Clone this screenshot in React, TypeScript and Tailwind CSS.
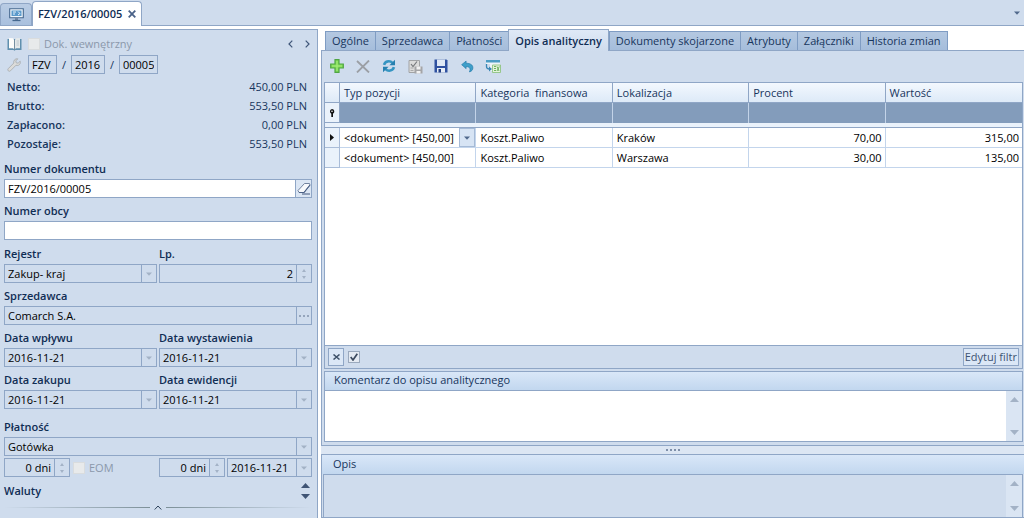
import React from "react";

const Down = ({ className = "fill-[#a3b2c6]" }: { className?: string }) => (
  <svg width="6" height="4" viewBox="0 0 6 4" className={className} aria-hidden="true">
    <path d="M0 0.500h6L3 3.800z" />
  </svg>
);

const box = "flex h-[19px] min-w-0 border border-[#8fa6c6]";
const side = "flex w-[15px] shrink-0 items-center justify-center border-l border-[#8fa6c6]";
const text = "w-full min-w-0 flex-1 bg-transparent px-[3px] text-black outline-none";
const labelCls = "block h-5 font-semibold leading-5 text-[#0f2d54]";

function Field({ label, id, children }: { label: string; id: string; children: React.ReactNode }) {
  return (
    <div className="min-w-0">
      <label htmlFor={id} className={labelCls}>{label}</label>
      {children}
    </div>
  );
}

function DateBox({ id, label, value, className = "" }: { id: string; label?: string; value: string; className?: string }) {
  return (
    <div className={`${box} ${className}`}>
      <input id={id} aria-label={label} className={text} defaultValue={value} readOnly />
      <button type="button" aria-label="Wybierz datę" className={side}><Down /></button>
    </div>
  );
}

function SelectBox({ id, value }: { id: string; value: string }) {
  return (
    <div className={`${box} relative`}>
      <select id={id} className={`${text} appearance-none`}>
        <option>{value}</option>
      </select>
      <span className={`${side} pointer-events-none`}><Down /></span>
    </div>
  );
}

function Spin({ id, label, value, className = "" }: { id: string; label?: string; value: string; className?: string }) {
  return (
    <div className={`${box} ${className}`}>
      <input id={id} aria-label={label} className={`${text} text-right`} defaultValue={value} readOnly />
      <div className="flex w-[15px] shrink-0 flex-col items-center justify-center gap-1 border-l border-[#8fa6c6]">
        <button type="button" aria-label="Zwiększ"><svg width="4" height="3" viewBox="0 0 4 3" className="block fill-[#a3b2c6]"><path d="M0 3h4L2 0z" /></svg></button>
        <button type="button" aria-label="Zmniejsz"><svg width="4" height="3" viewBox="0 0 4 3" className="block fill-[#a3b2c6]"><path d="M0 0h4L2 3z" /></svg></button>
      </div>
    </div>
  );
}

const totals = [
  ["Netto:", "450,00 PLN"],
  ["Brutto:", "553,50 PLN"],
  ["Zapłacono:", "0,00 PLN"],
  ["Pozostaje:", "553,50 PLN"],
];

function Sidebar() {
  return (
    <aside className="flex w-[318px] shrink-0 flex-col border-t border-r border-[#8fa6c6] bg-[#cfdced] pr-[5px] pl-1">
      <div className="flex h-6 items-center pt-1 pl-[3px]">
        <svg width="15" height="14" viewBox="0 0 15 14" aria-hidden="true">
          <path d="M0.500 2h14v11H8.500l-1 0.800-1-0.800h-6z" fill="#5f8fae" />
          <path d="M2 1l4 0.300L7.200 3v9.300L6 11.300H2z" fill="#fdfdfb" />
          <path d="M13 1L9 1.300 7.800 3v9.300L9 11.300h4z" fill="#e4e9ea" />
          <path d="M7.500 3v10" stroke="#6e8798" strokeWidth="0.800" />
          <path d="M9.500 4h2.500M9.500 6h2.500M9.500 8h2.500" stroke="#b4bfc6" strokeWidth="0.800" />
        </svg>
        <label className="ml-[6px] flex items-center gap-[4px] text-[#8b98ab]">
          <input type="checkbox" disabled className="size-3 appearance-none border border-[#d9dcde] bg-[#e8eaeb]" />
          Dok. wewnętrzny
        </label>
        <div className="ml-auto flex gap-3 pr-[2px]">
          <button type="button" aria-label="Poprzedni"><svg width="5" height="8" viewBox="0 0 5 8" fill="none" stroke="#3f5679" strokeWidth="1.200"><path d="M4.300 0.700L1 4l3.300 3.300" /></svg></button>
          <button type="button" aria-label="Następny"><svg width="5" height="8" viewBox="0 0 5 8" fill="none" stroke="#3f5679" strokeWidth="1.200"><path d="M0.700 0.700L4 4 0.700 7.300" /></svg></button>
        </div>
      </div>
      <div className="mt-px flex h-[19px] items-center pl-[3px] text-[#17355c]">
        <svg width="14" height="14" viewBox="0 0 14 14" aria-hidden="true">
          <path d="M10.800 0.800L8.800 2.900l0.400 1.900 1.900 0.400 2.100-2c0.500 1.900-0.300 3.500-1.800 4.100-0.900 0.300-1.700 0.200-2.400-0.100L3.500 12.800c-0.700 0.600-1.600 0.600-2.200 0-0.600-0.600-0.600-1.500 0-2.200L6.800 5C6.200 2.800 8 0.300 10.800 0.800z" fill="#dcdcda" stroke="#a5a8ab" strokeWidth="0.800" />
        </svg>
        <input aria-label="Symbol" readOnly defaultValue="FZV" className="ml-[7px] h-[19px] w-[29px] border border-[#8fa6c6] px-[3px] text-black" />
        <span className="w-[14px] text-center">/</span>
        <input aria-label="Rok" readOnly defaultValue="2016" className="h-[19px] w-[34px] border border-[#8fa6c6] px-[3px] text-black" />
        <span className="w-[14px] text-center">/</span>
        <input aria-label="Numer" readOnly defaultValue="00005" className="h-[19px] w-[39px] border border-[#8fa6c6] px-[3px] text-black" />
      </div>
      <dl className="mt-[3px] pr-[5px] pl-[3px] text-[#17355c]">
        {totals.map(([k, v]) => (
          <div key={k} className="flex h-[19px] items-center justify-between">
            <dt className="font-semibold">{k}</dt>
            <dd>{v}</dd>
          </div>
        ))}
      </dl>
      <div className="mt-[6px] grid gap-[3px]">
        <Field label="Numer dokumentu" id="nr">
          <div className={`${box} bg-white`}>
            <input id="nr" className={text} defaultValue="FZV/2016/00005" />
            <button type="button" aria-label="Wyczyść" className="flex w-4 shrink-0 items-center justify-center border-l border-[#8fa6c6] bg-[#dbe6f4]">
              <svg width="14" height="13" viewBox="0 0 14 13"><path d="M1 8.500L7.500 1.500h5L13 3 7 10.500H2z" fill="#f7f9fc" stroke="#647694" strokeWidth="0.900" /><path d="M2 10.500h5L13 3" fill="none" stroke="#4c6288" strokeWidth="1.200" /><path d="M5 12h8" stroke="#41567c" /></svg>
            </button>
          </div>
        </Field>
        <Field label="Numer obcy" id="nro">
          <div className={`${box} bg-white`}><input id="nro" className={text} /></div>
        </Field>
      </div>
      <div className="mt-1 grid grid-cols-2 gap-x-[2px] gap-y-[3px]">
        <Field label="Rejestr" id="rej"><SelectBox id="rej" value="Zakup- kraj" /></Field>
        <Field label="Lp." id="lp"><Spin id="lp" value="2" /></Field>
        <div className="col-span-2">
          <Field label="Sprzedawca" id="spr">
            <div className={box}>
              <input id="spr" className={text} defaultValue="Comarch S.A." readOnly />
              <button type="button" aria-label="Wybierz sprzedawcę" className={side}>
                <svg width="10" height="2" viewBox="0 0 10 2" fill="#95a5bc"><path d="M0 0h2v2H0zM4 0h2v2H4zM8 0h2v2H8z" /></svg>
              </button>
            </div>
          </Field>
        </div>
        <Field label="Data wpływu" id="dw"><DateBox id="dw" value="2016-11-21" /></Field>
        <Field label="Data wystawienia" id="dwy"><DateBox id="dwy" value="2016-11-21" /></Field>
        <Field label="Data zakupu" id="dz"><DateBox id="dz" value="2016-11-21" /></Field>
        <Field label="Data ewidencji" id="de"><DateBox id="de" value="2016-11-21" /></Field>
      </div>
      <div className="mt-2">
        <Field label="Płatność" id="pl"><SelectBox id="pl" value="Gotówka" /></Field>
        <div className="mt-[2px] grid grid-cols-2 gap-x-[2px]">
          <div className="flex items-center">
            <Spin id="t1" label="Termin" value="0 dni" className="w-[66px]" />
            <label className="ml-[3px] flex items-center gap-1 text-[#8b98ab]">
              <input type="checkbox" disabled className="size-3 appearance-none border border-[#d9dcde] bg-[#e8eaeb]" />
              EOM
            </label>
          </div>
          <div className="flex gap-[2px]">
            <Spin id="t2" label="Odroczenie" value="0 dni" className="w-[66px]" />
            <DateBox id="t3" label="Termin płatności" value="2016-11-21" className="flex-1" />
          </div>
        </div>
      </div>
      <div className="mt-[2px] flex h-6 items-center justify-between">
        <h2 className="font-semibold text-[#0f2d54]">Waluty</h2>
        <div className="flex flex-col gap-[6px] pr-[2px]">
          <button type="button" aria-label="W górę"><svg width="9" height="5" viewBox="0 0 9 5" className="block fill-[#3f5474]"><path d="M0 5h9L4.500 0z" /></svg></button>
          <button type="button" aria-label="W dół"><svg width="9" height="5" viewBox="0 0 9 5" className="block fill-[#3f5474]"><path d="M0 0h9L4.500 5z" /></svg></button>
        </div>
      </div>
      <div className="mt-[2px] flex items-center gap-1">
        <span className="h-px flex-1 bg-linear-to-r from-transparent to-[#7d9098]" />
        <button type="button" aria-label="Zwiń"><svg width="8" height="5" viewBox="0 0 8 5" fill="none" stroke="#2f435c" className="block"><path d="M0.700 4.500L4 1l3.300 3.500" /></svg></button>
        <span className="h-px flex-1 bg-linear-to-l from-transparent to-[#7d9098]" />
      </div>
    </aside>
  );
}

const tabs = ["Ogólne", "Sprzedawca", "Płatności", "Opis analityczny", "Dokumenty skojarzone", "Atrybuty", "Załączniki", "Historia zmian"];

function Tabs() {
  return (
    <nav role="tablist" className="flex items-end border-b border-[#8fa6c6] bg-white pl-1">
      {tabs.map((t) =>
        t === "Opis analityczny" ? (
          <button key={t} type="button" role="tab" aria-selected="true" className="-mb-px h-[22px] border border-b-0 border-[#8fa6c6] bg-linear-to-b from-[#dfe9f7] to-[#cfdced] px-[6px] font-semibold text-[#0f2d54]">{t}</button>
        ) : (
          <button key={t} type="button" role="tab" aria-selected="false" className="-mr-px h-[19px] border border-b-0 border-[#7f9cc3] bg-linear-to-b from-[#b4c8e1] to-[#a5bddb] px-[6px] text-[#17355c]">{t}</button>
        ),
      )}
    </nav>
  );
}

const tool = "flex size-4 items-center justify-center";

function Toolbar() {
  return (
    <div role="toolbar" className="flex h-[31px] items-center gap-[10px] pb-px pl-[5px]">
      <button type="button" aria-label="Dodaj" className={tool}>
        <svg width="14" height="14" viewBox="0 0 14 14"><path d="M5 0.700h4V5h4.300v4H9v4.300H5V9H0.700V5H5z" fill="#7ed957" stroke="#4fa544" strokeWidth="1.200" /><path d="M7 2v10M2 7h10" stroke="#a6ee7d" /></svg>
      </button>
      <button type="button" aria-label="Usuń" className={tool}>
        <svg width="14" height="13" viewBox="0 0 14 13" fill="none" stroke="#9b9fa5" strokeWidth="1.800"><path d="M1 1l12 11.500M13 0.500L1 12.500" /></svg>
      </button>
      <button type="button" aria-label="Odśwież" className={tool}>
        <svg width="14" height="14" viewBox="0 0 14 14" fill="none">
          <path d="M2 5.800C2.800 3.400 4.700 2.300 6.800 2.300c1.500 0 2.700 0.600 3.700 1.600" stroke="#3595c2" strokeWidth="2.600" />
          <path d="M13 0.800v5.400H7.400z" fill="#2680b0" />
          <path d="M12 8.200c-0.800 2.400-2.700 3.500-4.800 3.500-1.500 0-2.700-0.600-3.700-1.600" stroke="#3595c2" strokeWidth="2.600" />
          <path d="M1 13.200V7.800h5.600z" fill="#2680b0" />
        </svg>
      </button>
      <button type="button" aria-label="Zatwierdź i zapisz" className={tool}>
        <svg width="15" height="15" viewBox="0 0 15 15"><path d="M1 1.500h10.500v12H1z" fill="#dcdcdb" stroke="#a1a3a5" /><path d="M3 5l2 2.500 4-5" fill="none" stroke="#77797c" strokeWidth="1.200" /><path d="M2.500 9h3M2.500 11.500h3" stroke="#aaa" /><path d="M6.500 7.500h8v7h-8z" fill="#a4a5a7" /><path d="M8.500 7.500h4v3h-4zM8.500 12h4v2.500h-4z" fill="#f1f1f1" /></svg>
      </button>
      <button type="button" aria-label="Zapisz" className={tool}>
        <svg width="14" height="14" viewBox="0 0 14 14"><path d="M0.500 0.500h12l1 1v12h-13z" fill="#2f51a0" /><path d="M3 0.500h8v6.500H3z" fill="#dfe8f5" /><path d="M3 9h8v4.500H3z" fill="#e8eef6" /><path d="M4.500 10h2.500v3.500H4.500z" fill="#233f85" /></svg>
      </button>
      <button type="button" aria-label="Cofnij" className={tool}>
        <svg width="13" height="13" viewBox="0 0 14 13"><path d="M0.700 4.500L5.500 0.700v2.300c4.500 0 7.300 1.700 7.300 5 0 2-1.300 3.800-3.800 4.300C10.800 9 9.500 6.800 5.500 6.500v2.300z" fill="#3f9fc9" stroke="#2378a8" strokeWidth="0.700" /></svg>
      </button>
      <button type="button" aria-label="Eksportuj do arkusza" className={tool}>
        <svg width="16" height="14" viewBox="0 0 16 14"><path d="M1 1h14v11H5V5H1z" fill="#edf4f8" /><path d="M1 1h14v2.500H1z" fill="#4b9cc4" /><path d="M1.500 5v2.500c0 2 1 2.500 3 2.500" fill="none" stroke="#3a86b5" strokeWidth="1.300" /><path d="M4 7.500L7 10l-3 2.500z" fill="#3a86b5" /><path d="M7.500 6h8v7.500h-8z" fill="#e3f3db" stroke="#86bf75" strokeWidth="0.800" /><path d="M9 7.500h2M9 9.500h2M9 11.500h2M12 7.500l2 4.500M14.300 7.500L12 12" stroke="#62ab55" strokeWidth="0.900" /></svg>
      </button>
    </div>
  );
}

const heads = ["Typ pozycji", "Kategoria  finansowa", "Lokalizacja", "Procent", "Wartość"];
const rows = [
  ["Koszt.Paliwo", "Kraków", "70,00", "315,00"],
  ["Koszt.Paliwo", "Warszawa", "30,00", "135,00"],
];

function Grid() {
  return (
    <div className="mr-px flex flex-1 flex-col border border-[#8fa6c6] bg-white">
      <table className="w-full table-fixed border-separate border-spacing-0">
        <colgroup>
          <col className="w-[15px]" />
          <col /><col /><col /><col /><col />
        </colgroup>
        <thead>
          <tr className="h-5 bg-linear-to-b from-[#f3f8fe] to-[#dce9f7] text-left text-[#17355c]">
            <th className="border-r border-b border-[#8fa6c6] p-0" />
            {heads.map((h) => (
              <th key={h} className="border-r border-b border-[#8fa6c6] px-1 py-0 font-normal whitespace-pre last:border-r-0">{h}</th>
            ))}
          </tr>
        </thead>
        <tbody>
          <tr className="h-5">
            <td className="border-r border-b border-[#8fa6c6] bg-[#eaf2fb] p-0">
              <svg width="6" height="8" viewBox="0 0 6 8" className="mx-auto block"><path d="M3 0a2.500 2.500 0 0 1 1 4.700V8H2.300V4.700A2.500 2.500 0 0 1 3 0z" fill="#111" /><circle cx="3" cy="2.300" r="0.800" fill="#fff" /></svg>
            </td>
            {heads.map((h) => (
              <td key={h} className="border-r border-[#c3d3e8] bg-[#839cbb] p-0 last:border-r-0" />
            ))}
          </tr>
          <tr className="h-[5px]"><td colSpan={6} className="border-b border-[#8fa6c6] bg-[#eaf2fb] p-0" /></tr>
          {rows.map(([kat, lok, proc, wart], i) => (
            <tr key={lok} className="h-5 text-black">
              <td className="border-r border-b border-[#a9bcd8] bg-[#eaf2fb] p-0">
                {i === 0 && <svg width="4" height="7" viewBox="0 0 4 7" className="mx-auto block"><path d="M0 0l4 3.500L0 7z" fill="#111" /></svg>}
              </td>
              <td className="border-r border-b border-[#c3d5ec] p-0">
                <div className="flex h-[19px] items-center justify-between pl-1">
                  <span className="whitespace-nowrap">&lt;dokument&gt; [450,00]</span>
                  {i === 0 && (
                    <button type="button" aria-label="Wybierz typ pozycji" className="flex h-[19px] w-4 items-center justify-center border border-[#a5bad6] bg-[#d7e4f4]">
                      <Down className="fill-[#51698c]" />
                    </button>
                  )}
                </div>
              </td>
              <td className="border-r border-b border-[#c3d5ec] px-1 py-0">{kat}</td>
              <td className="border-r border-b border-[#c3d5ec] px-1 py-0">{lok}</td>
              <td className="border-r border-b border-[#c3d5ec] px-[3px] py-0 text-right">{proc}</td>
              <td className="border-b border-[#c3d5ec] px-[3px] py-0 text-right">{wart}</td>
            </tr>
          ))}
        </tbody>
      </table>
      <div className="mt-auto flex h-[23px] items-center border-t border-[#8fa6c6] bg-[#cfdced] px-[3px]">
        <button type="button" aria-label="Wyczyść filtr" className="flex h-[18px] w-4 items-center justify-center border border-[#8fa6c6] bg-[#dbe7f6]">
          <svg width="7" height="6" viewBox="0 0 7 6" stroke="#3d5068" strokeWidth="1.500"><path d="M0.500 0.500l6 5M6.500 0.500l-6 5" /></svg>
        </button>
        <label className="relative ml-1 flex">
          <input type="checkbox" defaultChecked aria-label="Filtr aktywny" className="size-3 appearance-none border border-[#9aa9bd] bg-[#e4eaf2]" />
          <svg width="8" height="8" viewBox="0 0 8 8" fill="none" stroke="#3c4a5f" strokeWidth="1.700" className="pointer-events-none absolute top-[2px] left-[2px]"><path d="M0.700 4l2.300 3L7.300 0.700" /></svg>
        </label>
        <button type="button" className="ml-auto h-[18px] border border-[#8fa6c6] bg-[#dbe7f6] px-px leading-4 text-[#3d5473]">Edytuj filtr</button>
      </div>
    </div>
  );
}

function ScrollArrows() {
  return (
    <div className="flex w-4 shrink-0 flex-col items-center justify-between bg-[#dae5f3] py-[6px]">
      <svg width="9" height="5" viewBox="0 0 9 5" fill="#a3b2c6"><path d="M0 5h9L4.500 0z" /></svg>
      <svg width="9" height="5" viewBox="0 0 9 5" fill="#a3b2c6"><path d="M0 0h9L4.500 5z" /></svg>
    </div>
  );
}

export default function App() {
  return (
    <div className="flex min-h-screen flex-col bg-white font-['Open_Sans','Noto_Sans',sans-serif] text-[11px] leading-4">
      <header className="flex h-[26px] items-end border-b border-[#8fa6c6] bg-[#cfdced]">
        <button type="button" aria-label="Pulpit" className="flex h-[22px] w-8 items-center justify-center rounded-t-sm border border-b-0 border-[#8fa6c6] bg-linear-to-b from-[#b9cce4] to-[#a9c0de]">
          <svg width="15" height="14" viewBox="0 0 15 14"><path d="M0.700 0.700h13.600v9H0.700z" fill="#eef5fb" stroke="#45688f" strokeWidth="1.100" /><path d="M2.500 2.500h10v5.500h-10z" fill="#5b9acb" /><path d="M4 4h3M4 6h2M9 3.500l2 2-2 1.500" stroke="#e9f3fb" fill="none" /><path d="M6 10h3v2H6z" fill="#6f86a3" /><path d="M3.500 12.500h8" stroke="#45688f" strokeWidth="1.300" /></svg>
        </button>
        <div className="-mb-px flex h-[25px] items-center gap-[6px] rounded-t-sm border border-b-0 border-[#8fa6c6] bg-white px-[5px] font-semibold text-[#0f2d54]">
          FZV/2016/00005
          <button type="button" aria-label="Zamknij"><svg width="8" height="8" viewBox="0 0 8 8" stroke="#4a6288" strokeWidth="1.800" className="block"><path d="M0.700 0.700l6.600 6.600M7.300 0.700L0.700 7.300" /></svg></button>
        </div>
        <button type="button" aria-label="Lista kart" className="mr-1 ml-auto flex h-[25px] items-center"><Down className="fill-[#51698c]" /></button>
      </header>
      <div className="flex flex-1 gap-[3px] pt-[3px]">
        <Sidebar />
        <main className="flex min-w-0 flex-1 flex-col">
          <Tabs />
          <section className="flex flex-1 flex-col border-b border-l border-[#8fa6c6] bg-[#cfdced] pb-[3px] pl-[2px]">
            <Toolbar />
            <Grid />
            <div className="mt-[2px] mr-px border border-[#8fa6c6]">
              <label htmlFor="kom" className="block h-[18px] bg-linear-to-b from-[#d9e7f8] to-[#c2d7ef] px-[9px] leading-4 text-[#17355c]">Komentarz do opisu analitycznego</label>
              <div className="flex h-[51px] border-t border-[#8fa6c6] bg-white">
                <textarea id="kom" className="min-w-0 flex-1 resize-none px-1 outline-none" />
                <ScrollArrows />
              </div>
            </div>
          </section>
          <div className="flex h-2 items-center justify-center bg-[#dce6f3]">
            <svg width="14" height="2" viewBox="0 0 14 2" fill="#7f90aa"><path d="M0 0h2v2H0zM4 0h2v2H4zM8 0h2v2H8zM12 0h2v2h-2z" /></svg>
          </div>
          <section className="border border-r-0 border-[#8fa6c6] bg-[#cfdced]">
            <label htmlFor="opis" className="block h-[19px] bg-linear-to-b from-[#d9e7f8] to-[#c2d7ef] px-[11px] leading-[18px] text-[#17355c]">Opis</label>
            <div className="mx-px flex h-[43px] border border-b-0 border-[#8fa6c6]">
              <textarea id="opis" readOnly className="min-w-0 flex-1 resize-none bg-transparent px-1 outline-none" />
              <ScrollArrows />
            </div>
          </section>
        </main>
      </div>
    </div>
  );
}
